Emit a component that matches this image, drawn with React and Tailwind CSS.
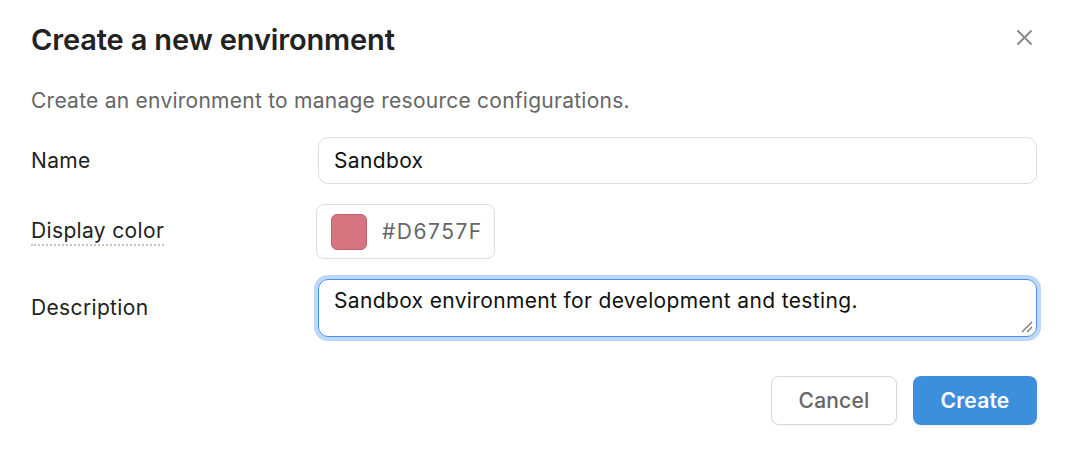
import React from "react";

export default function App() {
  return (
    <div className="w-[1066px] h-[454px] bg-white font-['Inter',sans-serif] text-[#1f1f1f] pl-[31px] pr-[29px]">
      <div className="flex items-center justify-between pt-[22px] h-[58px]">
        <h1 className="text-[29px] font-semibold leading-[36px] tracking-[-0.15px] text-[#222]">Create a new environment</h1>
        <button className="w-[24px] h-[24px] flex items-center justify-center text-[#8a8a8a] mr-[1px] -mt-[5px]">
          <svg width="17" height="17" viewBox="0 0 17 17" fill="none" stroke="currentColor" strokeWidth="2">
            <path d="M1.5 1.5L15.5 15.5M15.5 1.5L1.5 15.5" />
          </svg>
        </button>
      </div>
      <p className="mt-[29px] text-[21px] leading-[28px] tracking-[0.25px] text-[#666]">
        Create an environment to manage resource configurations.
      </p>
      <div className="mt-[22px] grid grid-cols-[287px_1fr] items-center gap-y-[20px]">
        <label className="text-[21px] tracking-[0.35px] text-[#222]">Name</label>
        <div className="h-[47px] rounded-[10px] border border-[#dedede] flex items-center px-[15px] text-[21px] tracking-[0.35px] text-[#111]">
          Sandbox
        </div>
        <label className="text-[21px] tracking-[0.35px] text-[#222] self-center -mt-[2px]">
          <span className="border-b-2 border-dotted border-[#c4c4c4] pb-[1px]">Display color</span>
        </label>
        <div className="justify-self-start -ml-[2px] h-[55px] w-[179px] rounded-[8px] border border-[#dedede] flex items-center pl-[14px] gap-[15px]">
          <div className="w-[36px] h-[36px] rounded-[6px] bg-[#D6757F] border border-[#c0646e]" />
          <span className="text-[21px] text-[#666] tracking-[1.5px]">#D6757F</span>
        </div>
        <label className="text-[21px] tracking-[0.35px] text-[#222]">Description</label>
        <div className="relative h-[58px] rounded-[10px] border border-[#4a8ef0] ring-[4px] ring-[#bcd8fb] px-[15px] pt-[5px] text-[21px] tracking-[0.35px] text-[#111]">
          Sandbox environment for development and testing.
          <svg className="absolute right-[3px] bottom-[3px]" width="14" height="14" viewBox="0 0 14 14" stroke="#777" strokeWidth="1.3">
            <path d="M3 13L13 3M8 13L13 8" />
          </svg>
        </div>
      </div>
      <div className="mt-[39px] flex justify-end gap-[16px]">
        <button className="w-[126px] h-[49px] rounded-[8px] border border-[#d9d9d9] bg-white text-[21px] font-medium tracking-[0.2px] text-[#666] shadow-[0_1px_2px_rgba(0,0,0,0.05)]">
          Cancel
        </button>
        <button className="w-[124px] h-[49px] rounded-[8px] bg-[#3d8fdc] text-[21px] font-semibold tracking-[0.2px] text-white shadow-[0_2px_3px_rgba(0,0,0,0.06)]">
          Create
        </button>
      </div>
    </div>
  );
}
